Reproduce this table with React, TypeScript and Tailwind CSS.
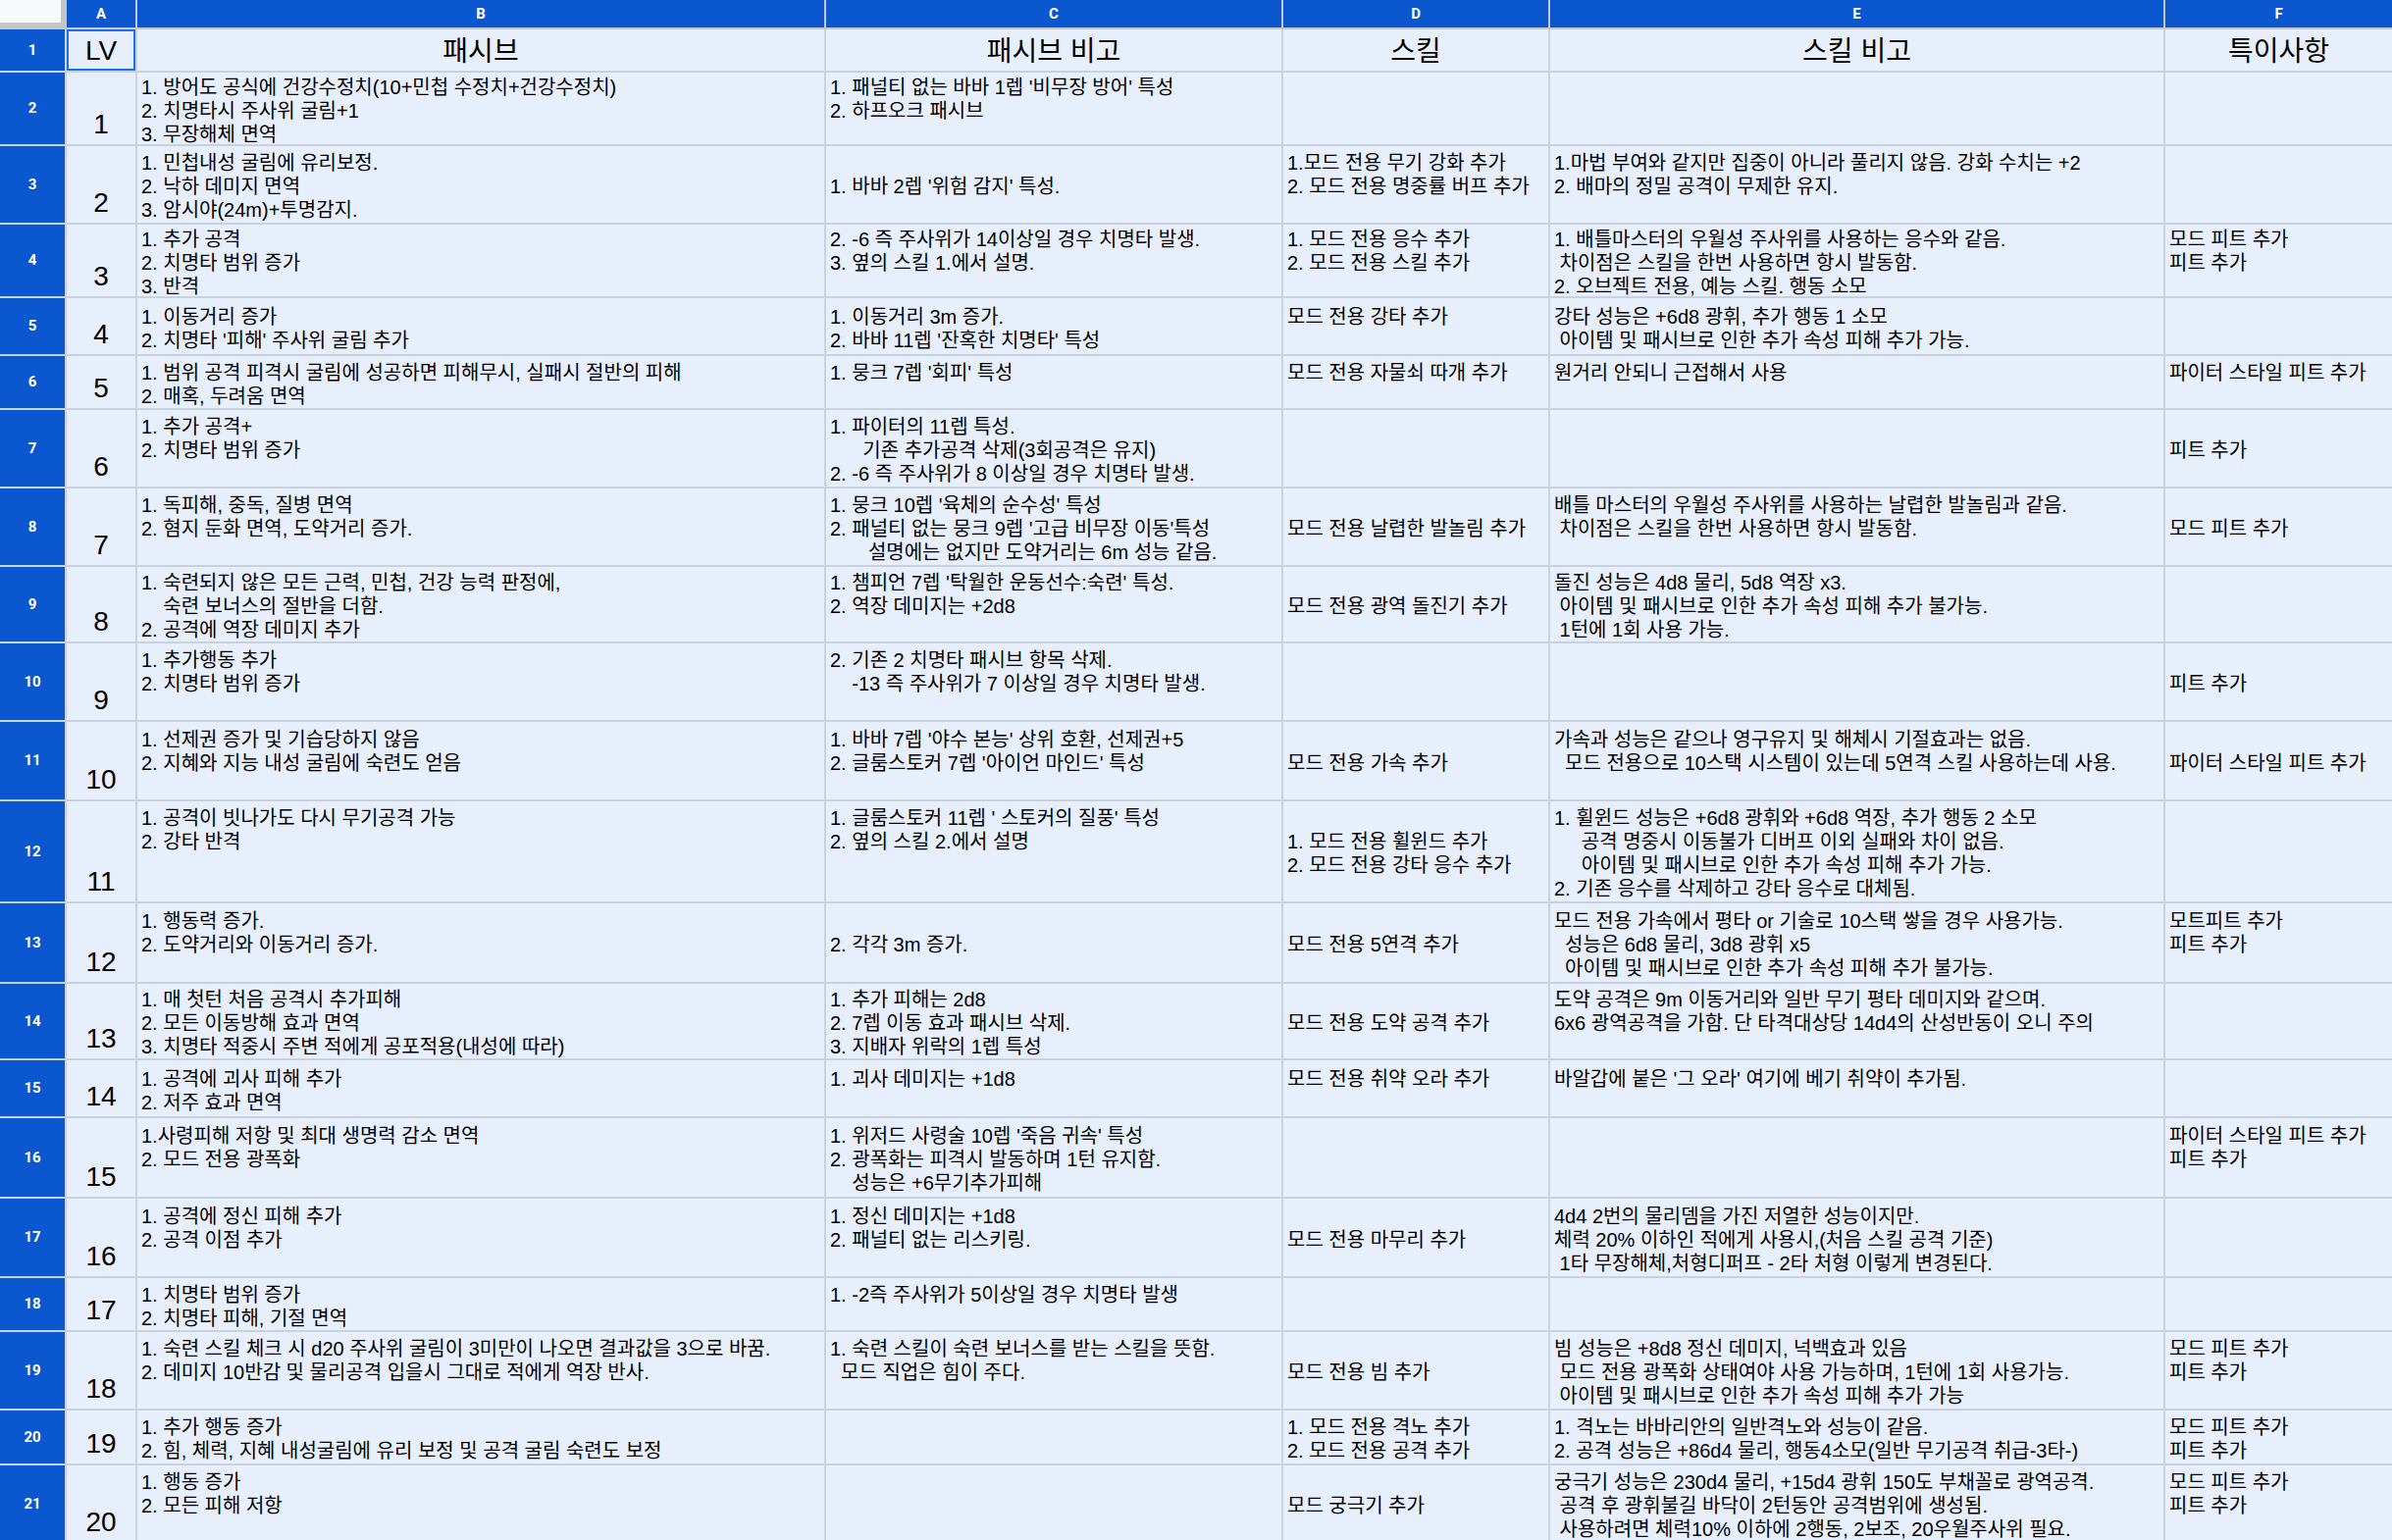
type Row = {
  n: number;
  h: string;
  lv: string;
  cells: string[][];
};

const cols = "grid grid-cols-[66px_70px_700px_464px_270px_625px_231px] gap-x-[2px]";

const rows: Row[] = [
  {
    n: 2,
    h: "h-[73px]",
    lv: "1",
    cells: [
      ["1. 방어도 공식에 건강수정치(10+민첩 수정치+건강수정치)", "2. 치명타시 주사위 굴림+1", "3. 무장해체 면역"],
      ["1. 패널티 없는 바바 1렙 '비무장 방어' 특성", "2. 하프오크 패시브", ""],
      [],
      [],
      [],
    ],
  },
  {
    n: 3,
    h: "h-[78px]",
    lv: "2",
    cells: [
      ["1. 민첩내성 굴림에 유리보정.", "2. 낙하 데미지 면역", "3. 암시야(24m)+투명감지."],
      ["1. 바바 2렙 '위험 감지' 특성."],
      ["1.모드 전용 무기 강화 추가", "2. 모드 전용 명중률 버프 추가", ""],
      ["1.마법 부여와 같지만 집중이 아니라 풀리지 않음. 강화 수치는 +2", "2. 배마의 정밀 공격이 무제한 유지.", ""],
      [],
    ],
  },
  {
    n: 4,
    h: "h-[73px]",
    lv: "3",
    cells: [
      ["1. 추가 공격", "2. 치명타 범위 증가", "3. 반격"],
      ["2. -6 즉 주사위가 14이상일 경우 치명타 발생.", "3. 옆의 스킬 1.에서 설명.", ""],
      ["1. 모드 전용 응수 추가", "2. 모드 전용 스킬 추가", ""],
      ["1. 배틀마스터의 우월성 주사위를 사용하는 응수와 같음.", " 차이점은 스킬을 한번 사용하면 항시 발동함.", "2. 오브젝트 전용, 예능 스킬. 행동 소모"],
      ["모드 피트 추가", "피트 추가", ""],
    ],
  },
  {
    n: 5,
    h: "h-[57px]",
    lv: "4",
    cells: [
      ["1. 이동거리 증가", "2. 치명타 '피해' 주사위 굴림 추가"],
      ["1. 이동거리 3m 증가.", "2. 바바 11렙 '잔혹한 치명타' 특성"],
      ["모드 전용 강타 추가", ""],
      ["강타 성능은 +6d8 광휘, 추가 행동 1 소모", " 아이템 및 패시브로 인한 추가 속성 피해 추가 가능."],
      [],
    ],
  },
  {
    n: 6,
    h: "h-[53px]",
    lv: "5",
    cells: [
      ["1. 범위 공격 피격시 굴림에 성공하면 피해무시, 실패시 절반의 피해", "2. 매혹, 두려움 면역"],
      ["1. 뭉크 7렙 '회피' 특성", ""],
      ["모드 전용 자물쇠 따개 추가", ""],
      ["원거리 안되니 근접해서 사용", ""],
      ["파이터 스타일 피트 추가", ""],
    ],
  },
  {
    n: 7,
    h: "h-[78px]",
    lv: "6",
    cells: [
      ["1. 추가 공격+", "2. 치명타 범위 증가", ""],
      ["1. 파이터의 11렙 특성.", "      기존 추가공격 삭제(3회공격은 유지)", "2. -6 즉 주사위가 8 이상일 경우 치명타 발생."],
      [],
      [],
      ["피트 추가"],
    ],
  },
  {
    n: 8,
    h: "h-[78px]",
    lv: "7",
    cells: [
      ["1. 독피해, 중독, 질병 면역", "2. 혐지 둔화 면역, 도약거리 증가.", ""],
      ["1. 뭉크 10렙 '육체의 순수성' 특성", "2. 패널티 없는 뭉크 9렙 '고급 비무장 이동'특성", "       설명에는 없지만 도약거리는 6m 성능 같음."],
      ["모드 전용 날렵한 발놀림 추가"],
      ["배틀 마스터의 우월성 주사위를 사용하는 날렵한 발놀림과 같음.", " 차이점은 스킬을 한번 사용하면 항시 발동함.", ""],
      ["모드 피트 추가"],
    ],
  },
  {
    n: 9,
    h: "h-[76px]",
    lv: "8",
    cells: [
      ["1. 숙련되지 않은 모든 근력, 민첩, 건강 능력 판정에,", "    숙련 보너스의 절반을 더함.", "2. 공격에 역장 데미지 추가"],
      ["1. 챔피언 7렙 '탁월한 운동선수:숙련' 특성.", "2. 역장 데미지는 +2d8", ""],
      ["모드 전용 광역 돌진기 추가"],
      ["돌진 성능은 4d8 물리, 5d8 역장 x3.", " 아이템 및 패시브로 인한 추가 속성 피해 추가 불가능.", " 1턴에 1회 사용 가능."],
      [],
    ],
  },
  {
    n: 10,
    h: "h-[78px]",
    lv: "9",
    cells: [
      ["1. 추가행동 추가", "2. 치명타 범위 증가", ""],
      ["2. 기존 2 치명타 패시브 항목 삭제.", "    -13 즉 주사위가 7 이상일 경우 치명타 발생.", ""],
      [],
      [],
      ["피트 추가"],
    ],
  },
  {
    n: 11,
    h: "h-[79px]",
    lv: "10",
    cells: [
      ["1. 선제권 증가 및 기습당하지 않음", "2. 지혜와 지능 내성 굴림에 숙련도 얻음", ""],
      ["1. 바바 7렙 '야수 본능' 상위 호환, 선제권+5", "2. 글룸스토커 7렙 '아이언 마인드' 특성", ""],
      ["모드 전용 가속 추가"],
      ["가속과 성능은 같으나 영구유지 및 해체시 기절효과는 없음.", "  모드 전용으로 10스택 시스템이 있는데 5연격 스킬 사용하는데 사용.", ""],
      ["파이터 스타일 피트 추가"],
    ],
  },
  {
    n: 12,
    h: "h-[102px]",
    lv: "11",
    cells: [
      ["1. 공격이 빗나가도 다시 무기공격 가능", "2. 강타 반격", "", ""],
      ["1. 글룸스토커 11렙 ' 스토커의 질풍' 특성", "2. 옆의 스킬 2.에서 설명", "", ""],
      ["1. 모드 전용 휠윈드 추가", "2. 모드 전용 강타 응수 추가"],
      [
        "1. 휠윈드 성능은 +6d8 광휘와 +6d8 역장, 추가 행동 2 소모",
        "     공격 명중시 이동불가 디버프 이외 실패와 차이 없음.",
        "     아이템 및 패시브로 인한 추가 속성 피해 추가 가능.",
        "2. 기존 응수를 삭제하고 강타 응수로 대체됨.",
      ],
      [],
    ],
  },
  {
    n: 13,
    h: "h-[80px]",
    lv: "12",
    cells: [
      ["1. 행동력 증가.", "2. 도약거리와 이동거리 증가.", ""],
      ["2. 각각 3m 증가."],
      ["모드 전용 5연격 추가"],
      ["모드 전용 가속에서 평타 or 기술로 10스택 쌓을 경우 사용가능.", "  성능은 6d8 물리, 3d8 광휘 x5", "  아이템 및 패시브로 인한 추가 속성 피해 추가 불가능."],
      ["모트피트 추가", "피트 추가", ""],
    ],
  },
  {
    n: 14,
    h: "h-[76px]",
    lv: "13",
    cells: [
      ["1. 매 첫턴 처음 공격시 추가피해", "2. 모든 이동방해 효과 면역", "3. 치명타 적중시 주변 적에게 공포적용(내성에 따라)"],
      ["1. 추가 피해는 2d8", "2. 7렙 이동 효과 패시브 삭제.", "3. 지배자 위락의 1렙 특성"],
      ["모드 전용 도약 공격 추가"],
      ["도약 공격은 9m 이동거리와 일반 무기 평타 데미지와 같으며.", "6x6 광역공격을 가함. 단 타격대상당 14d4의 산성반동이 오니 주의", ""],
      [],
    ],
  },
  {
    n: 15,
    h: "h-[57px]",
    lv: "14",
    cells: [
      ["1. 공격에 괴사 피해 추가", "2. 저주 효과 면역"],
      ["1. 괴사 데미지는 +1d8", ""],
      ["모드 전용 취약 오라 추가", ""],
      ["바알갑에 붙은 '그 오라' 여기에 베기 취약이 추가됨.", ""],
      [],
    ],
  },
  {
    n: 16,
    h: "h-[80px]",
    lv: "15",
    cells: [
      ["1.사령피해 저항 및 최대 생명력 감소 면역", "2. 모드 전용 광폭화", ""],
      ["1. 위저드 사령술 10렙 '죽음 귀속' 특성", "2. 광폭화는 피격시 발동하며 1턴 유지함.", "    성능은 +6무기추가피해"],
      [],
      [],
      ["파이터 스타일 피트 추가", "피트 추가", ""],
    ],
  },
  {
    n: 17,
    h: "h-[79px]",
    lv: "16",
    cells: [
      ["1. 공격에 정신 피해 추가", "2. 공격 이점 추가", ""],
      ["1. 정신 데미지는 +1d8", "2. 패널티 없는 리스키링.", ""],
      ["모드 전용 마무리 추가"],
      ["4d4 2번의 물리뎀을 가진 저열한 성능이지만.", "체력 20% 이하인 적에게 사용시,(처음 스킬 공격 기준)", " 1타 무장해체,처형디퍼프 - 2타 처형 이렇게 변경된다."],
      [],
    ],
  },
  {
    n: 18,
    h: "h-[53px]",
    lv: "17",
    cells: [
      ["1. 치명타 범위 증가", "2. 치명타 피해, 기절 면역"],
      ["1. -2즉 주사위가 5이상일 경우 치명타 발생", ""],
      [],
      [],
      [],
    ],
  },
  {
    n: 19,
    h: "h-[78px]",
    lv: "18",
    cells: [
      ["1. 숙련 스킬 체크 시 d20 주사위 굴림이 3미만이 나오면 결과값을 3으로 바꿈.", "2. 데미지 10반감 및 물리공격 입을시 그대로 적에게 역장 반사.", ""],
      ["1. 숙련 스킬이 숙련 보너스를 받는 스킬을 뜻함.", "  모드 직업은 힘이 주다.", ""],
      ["모드 전용 빔 추가"],
      ["빔 성능은 +8d8 정신 데미지, 넉백효과 있음", " 모드 전용 광폭화 상태여야 사용 가능하며, 1턴에 1회 사용가능.", " 아이템 및 패시브로 인한 추가 속성 피해 추가 가능"],
      ["모드 피트 추가", "피트 추가", ""],
    ],
  },
  {
    n: 20,
    h: "h-[54px]",
    lv: "19",
    cells: [
      ["1. 추가 행동 증가", "2. 힘, 체력, 지혜 내성굴림에 유리 보정 및 공격 굴림 숙련도 보정"],
      [],
      ["1. 모드 전용 격노 추가", "2. 모드 전용 공격 추가"],
      ["1. 격노는 바바리안의 일반격노와 성능이 같음.", "2. 공격 성능은 +86d4 물리, 행동4소모(일반 무기공격 취급-3타-)"],
      ["모드 피트 추가", "피트 추가"],
    ],
  },
  {
    n: 21,
    h: "h-[78px]",
    lv: "20",
    cells: [
      ["1. 행동 증가", "2. 모든 피해 저항", ""],
      [],
      ["모드 궁극기 추가"],
      ["궁극기 성능은 230d4 물리, +15d4 광휘 150도 부채꼴로 광역공격.", " 공격 후 광휘불길 바닥이 2턴동안 공격범위에 생성됨.", " 사용하려면 체력10% 이하에 2행동, 2보조, 20우월주사위 필요."],
      ["모드 피트 추가", "피트 추가", ""],
    ],
  },
];

const headers = ["패시브", "패시브 비고", "스킬", "스킬 비고", "특이사항"];

function RowHead({ n }: { n: number }) {
  return (
    <div className="bg-[#0b57d0] text-white font-bold text-[15px] flex items-center justify-center font-['Roboto','Liberation_Sans',sans-serif]">
      {n}
    </div>
  );
}

function Cell({ lines }: { lines: string[] }) {
  return (
    <div className="bg-[#e7effd] overflow-hidden flex flex-col justify-center pl-[4px] pr-[3px] pt-[4px]">
      {lines.map((l, i) => (
        <div key={i} className="h-[24px] leading-[24px] whitespace-pre">
          {l === "" ? "\u00a0" : l}
        </div>
      ))}
    </div>
  );
}

export default function App() {
  return (
    <div className="h-screen w-full overflow-hidden bg-[#c9d1dd] text-black text-[20px] font-['Liberation_Sans','Noto_Sans_CJK_KR',sans-serif]">
      {/* column letters */}
      <div className={`${cols} h-[28px] bg-[#c4c7c5]`}>
        <div className="bg-[#c4c7c5] flex items-start">
          <div className="w-[62px] h-[23px] bg-[#f8f9fa]" />
        </div>
        {["A", "B", "C", "D", "E", "F"].map((c) => (
          <div
            key={c}
            className="bg-[#0b57d0] text-white font-bold text-[15px] flex items-center justify-center font-['Roboto','Liberation_Sans',sans-serif]"
          >
            {c}
          </div>
        ))}
      </div>
      <div className="h-[2px] bg-[#c4c7c5]" />

      <div className="flex flex-col gap-y-[2px]">
        {/* title row */}
        <div className={`${cols} h-[42px]`}>
          <RowHead n={1} />
          <div className="bg-[#e7effd] border-2 border-[#1a73e8] flex items-center justify-center text-[28px] leading-none pt-[2px]">
            LV
          </div>
          {headers.map((h) => (
            <div key={h} className="bg-[#e7effd] flex items-center justify-center text-[28px] leading-none pt-[4px]">
              {h}
            </div>
          ))}
        </div>

        {rows.map((r) => (
          <div key={r.n} className={`${cols} ${r.h}`}>
            <RowHead n={r.n} />
            <div className="bg-[#e7effd] flex items-end justify-center text-[28px] leading-[32px] pb-[4px]">
              {r.lv}
            </div>
            {r.cells.map((c, i) => (
              <Cell key={i} lines={c} />
            ))}
          </div>
        ))}
      </div>
    </div>
  );
}
